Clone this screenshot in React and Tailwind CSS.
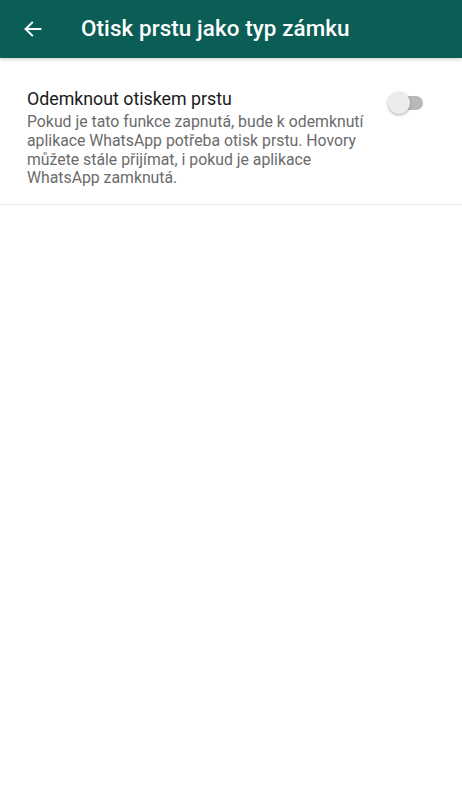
import React from 'react';

const Toggle = () => (
  <div className="relative w-[36px] h-[24px] flex items-center shrink-0">
    <div className="w-[31px] h-[14px] ml-[4px] rounded-full bg-[#b8b8b8]" />
    <div className="absolute left-0 top-[1px] w-[22px] h-[22px] rounded-full bg-[#ececec] shadow-[0_1px_3px_rgba(0,0,0,0.35)]" />
  </div>
);

const App = () => {
  return (
    <div className="w-[462px] h-[790px] bg-white font-['Roboto',sans-serif]">
      {/* Header */}
      <div className="h-[58px] bg-[#0b5e55] flex items-center shadow-[0_2px_3px_rgba(0,0,0,0.15)]">
        <button className="w-[64px] h-full flex items-center justify-center pl-[2px] text-white">
          <svg width="22" height="22" viewBox="0 0 24 24" fill="none">
            <path d="M20 12H4M11 5l-7 7 7 7" stroke="white" strokeWidth="2.2" strokeLinecap="square" />
          </svg>
        </button>
        <h1 className="ml-[17px] text-white text-[22.4px] font-medium tracking-[0.1px]">Otisk prstu jako typ zámku</h1>
      </div>

      {/* Setting row */}
      <div className="flex items-start pl-[27px] pr-[38px] pt-[30px] pb-[16px] border-b border-[#eeeeee]">
        <div className="flex-1">
          <div className="text-[17.8px] leading-[22px] text-[#1a1a1a]">Odemknout otiskem prstu</div>
          <p className="mt-[3px] text-[15.8px] leading-[18.8px] text-[#6b6b6b]">
            Pokud je tato funkce zapnutá, bude k odemknutí aplikace WhatsApp potřeba otisk prstu. Hovory můžete stále přijímat, i pokud je aplikace WhatsApp zamknutá.
          </p>
        </div>
        <div className="mt-[3px] ml-[16px]">
          <Toggle />
        </div>
      </div>
    </div>
  );
};

export default App;
